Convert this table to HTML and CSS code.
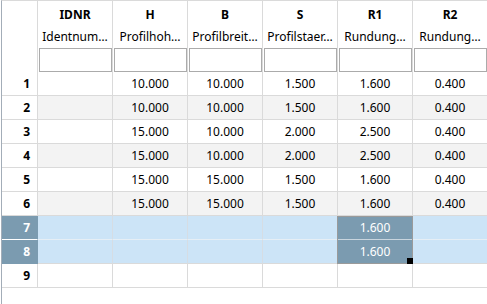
FILE: index.html
```html
<!DOCTYPE html>
<html>
<head>
<meta charset="utf-8">
<link rel="stylesheet" href="styles.css">
</head>
<body>
<div class="grid">
  <div class="row head">
    <div class="rh"></div>
    <div class="hc"><div class="t">IDNR</div><div class="s">Identnum…</div><div class="f"></div></div>
    <div class="hc"><div class="t">H</div><div class="s">Profilhoh…</div><div class="f"></div></div>
    <div class="hc"><div class="t">B</div><div class="s">Profilbreit…</div><div class="f"></div></div>
    <div class="hc"><div class="t">S</div><div class="s">Profilstaer…</div><div class="f"></div></div>
    <div class="hc"><div class="t">R1</div><div class="s">Rundung…</div><div class="f"></div></div>
    <div class="hc"><div class="t">R2</div><div class="s">Rundung…</div><div class="f"></div></div>
  </div>
  <div class="row"><div class="rh">1</div><div class="c"></div><div class="c">10.000</div><div class="c">10.000</div><div class="c">1.500</div><div class="c">1.600</div><div class="c">0.400</div></div>
  <div class="row alt"><div class="rh">2</div><div class="c"></div><div class="c">10.000</div><div class="c">10.000</div><div class="c">1.500</div><div class="c">1.600</div><div class="c">0.400</div></div>
  <div class="row"><div class="rh">3</div><div class="c"></div><div class="c">15.000</div><div class="c">10.000</div><div class="c">2.000</div><div class="c">2.500</div><div class="c">0.400</div></div>
  <div class="row alt"><div class="rh">4</div><div class="c"></div><div class="c">15.000</div><div class="c">10.000</div><div class="c">2.000</div><div class="c">2.500</div><div class="c">0.400</div></div>
  <div class="row"><div class="rh">5</div><div class="c"></div><div class="c">15.000</div><div class="c">15.000</div><div class="c">1.500</div><div class="c">1.600</div><div class="c">0.400</div></div>
  <div class="row alt"><div class="rh">6</div><div class="c"></div><div class="c">15.000</div><div class="c">15.000</div><div class="c">1.500</div><div class="c">1.600</div><div class="c">0.400</div></div>
  <div class="row sel first"><div class="rh">7</div><div class="c"></div><div class="c"></div><div class="c"></div><div class="c"></div><div class="c cur">1.600<div class="range"><div class="handle"></div></div></div><div class="c"></div></div>
  <div class="row sel last"><div class="rh">8</div><div class="c"></div><div class="c"></div><div class="c"></div><div class="c"></div><div class="c cur">1.600</div><div class="c"></div></div>
  <div class="row"><div class="rh">9</div><div class="c"></div><div class="c"></div><div class="c"></div><div class="c"></div><div class="c"></div><div class="c"></div></div>
</div>
</body>
</html>
```
FILE: styles.css
```css
html, body {
  margin: 0;
  padding: 0;
  background: #fff;
}
body {
  font-family: "Noto Sans", "Open Sans", sans-serif;
  font-size: 12px;
  color: #000;
  overflow: hidden;
}
.grid {
  margin-left: 1px;
  border-left: 1px solid #a3adb8;
  border-top: 1px solid #dadada;
  min-height: 100vh;
  box-sizing: border-box;
}
.row {
  display: flex;
  height: 24px;
}
.row.head {
  height: 71px;
}
.rh {
  flex: 0 0 36px;
  box-sizing: border-box;
  border-right: 1px solid #dadada;
  border-bottom: 1px solid #dadada;
  text-align: right;
  padding-right: 7px;
  font-weight: bold;
  line-height: 23px;
}
.head .rh {
  border-bottom: none;
}
.hc {
  flex: 0 0 75px;
  box-sizing: border-box;
  border-right: 1px solid #dadada;
  text-align: center;
  padding-top: 5px;
}
.hc .t {
  font-weight: bold;
  line-height: 18px;
}
.hc .s {
  line-height: 18px;
  margin-top: 4px;
  white-space: nowrap;
}
.hc .f {
  margin: 2px 0 0 1px;
  height: 24px;
  box-sizing: border-box;
  border: 1px solid #ababab;
  background: #fff;
}
.c {
  flex: 0 0 75px;
  box-sizing: border-box;
  border-right: 1px solid #dadada;
  border-bottom: 1px solid #dadada;
  text-align: center;
  line-height: 23px;
}
.alt .c {
  background: #f3f3f3;
}
.sel .c {
  background: #cce4f7;
  border-right-color: #d6dde4;
}
.sel.first .c {
  border-bottom-color: #e6eef5;
}
.sel .rh {
  background: #7b9bb0;
  color: #fff;
  border-right-color: #7b9bb0;
}
.sel.first .rh {
  border-bottom-color: #fff;
}
.sel.last .rh {
  border-bottom-color: #7b9bb0;
}
.sel .c.cur {
  background: #7b9bb0;
  color: #fff;
  border-right-color: #7b9bb0;
}
.sel.first .c.cur {
  border-bottom-color: #c9d5de;
  position: relative;
}
.range {
  position: absolute;
  left: -1px;
  top: 0;
  width: 76px;
  height: 48px;
  box-sizing: border-box;
  border: 1px solid #9a9a9a;
  pointer-events: none;
}
.handle {
  position: absolute;
  right: -1px;
  bottom: -1px;
  width: 6px;
  height: 6px;
  background: #000;
}
```
